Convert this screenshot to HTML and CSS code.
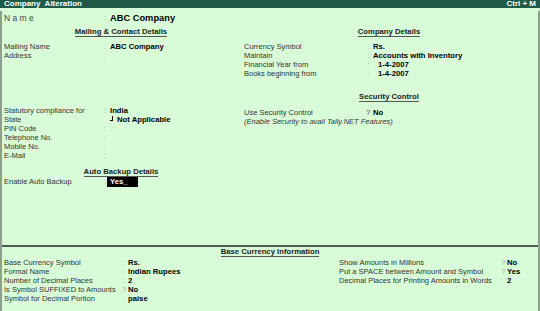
FILE: index.html
```html
<!DOCTYPE html>
<html lang="en">
<head>
    <meta charset="UTF-8">
    <title>Company Alteration</title>
    <link rel="stylesheet" href="styles.css">
</head>
<body>
    <div class="titlebar">
        <span>Company&nbsp; Alteration</span>
        <span>Ctrl + M</span>
    </div>
    <div class="screen">
        <div class="upper">
            <div class="name-row">
                <span class="name-label">N a m e</span>
                <span class="sep">:</span>
                <span class="name-value">ABC Company</span>
            </div>
            <div class="columns">
                <div class="col-left">
                    <div class="heading"><span>Mailing &amp; Contact Details</span></div>
                    <div class="rows first">
                        <div class="row"><span>Mailing Name</span><span class="sep">:</span><b>ABC Company</b></div>
                        <div class="row"><span>Address</span><span class="sep">:</span><b></b></div>
                    </div>
                    <div class="rows statutory">
                        <div class="row"><span>Statutory compliance for</span><span class="sep">:</span><b>India</b></div>
                        <div class="row"><span>State</span><span class="sep"></span><b><i class="corner"></i>Not Applicable</b></div>
                        <div class="row"><span>PIN Code</span><span class="sep">:</span><b></b></div>
                        <div class="row"><span>Telephone No.</span><span class="sep">:</span><b></b></div>
                        <div class="row"><span>Mobile No.</span><span class="sep">:</span><b></b></div>
                        <div class="row"><span>E-Mail</span><span class="sep">:</span><b></b></div>
                    </div>
                    <div class="heading backup"><span>Auto Backup Details</span></div>
                    <div class="rows">
                        <div class="row"><span>Enable Auto Backup</span><span class="sep">:</span><b class="cursor">Yes<u>_</u></b></div>
                    </div>
                </div>
                <div class="col-right">
                    <div class="heading"><span>Company Details</span></div>
                    <div class="rows first">
                        <div class="row"><span>Currency Symbol</span><span class="sep">:</span><b>Rs.</b></div>
                        <div class="row"><span>Maintain</span><span class="sep">:</span><b>Accounts with Inventory</b></div>
                        <div class="row"><span>Financial Year from</span><span class="sep">:</span><b class="date">1-4-2007</b></div>
                        <div class="row"><span>Books beginning from</span><span class="sep">:</span><b class="date">1-4-2007</b></div>
                    </div>
                    <div class="heading security"><span>Security Control</span></div>
                    <div class="rows security-rows">
                        <div class="row"><span>Use Security Control</span><span class="sep">?</span><b>No</b></div>
                        <div class="note">(Enable Security to avail Tally.NET Features)</div>
                    </div>
                </div>
            </div>
        </div>
        <div class="lower">
            <div class="heading"><span>Base Currency Information</span></div>
            <div class="base">
                <div class="rows base-left">
                    <div class="row"><span>Base Currency Symbol</span><span class="sep">:</span><b>Rs.</b></div>
                    <div class="row"><span>Formal Name</span><span class="sep">:</span><b>Indian Rupees</b></div>
                    <div class="row"><span>Number of Decimal Places</span><span class="sep">:</span><b>2</b></div>
                    <div class="row"><span>Is Symbol SUFFIXED to Amounts</span><span class="sep">?</span><b>No</b></div>
                    <div class="row"><span>Symbol for Decimal Portion</span><span class="sep">:</span><b>paise</b></div>
                </div>
                <div class="rows base-right">
                    <div class="row"><span>Show Amounts in Millions</span><span class="sep">?</span><b>No</b></div>
                    <div class="row"><span>Put a SPACE between Amount and Symbol</span><span class="sep">?</span><b>Yes</b></div>
                    <div class="row"><span>Decimal Places for Printing Amounts in Words</span><span class="sep">:</span><b>2</b></div>
                </div>
            </div>
        </div>
    </div>
</body>
</html>
```

FILE: styles.css
```css
/* Tally style green form */
body {
    margin: 0;
    width: 540px;
    height: 311px;
    overflow: hidden;
    font-family: "Liberation Sans", Arial, sans-serif;
    font-size: 7.5px;
    color: #333;
    background: #d9fcd8;
}
.titlebar {
    height: 8px;
    line-height: 8px;
    background: #1f5a46;
    color: #fff;
    font-weight: bold;
    font-size: 8px;
    display: flex;
    justify-content: space-between;
    padding: 0 4px;
    overflow: hidden;
}
.screen {
    height: 303px;
    box-sizing: border-box;
    border-left: 2px solid #8f9f8f;
    border-right: 2px solid #8f9f8f;
    border-bottom: 2px solid #8f9f8f;
}
.upper {
    height: 234px;
}
.name-row {
    display: grid;
    grid-template-columns: 100px 6px auto;
    height: 14px;
    line-height: 14px;
    margin-top: 3px;
    padding-left: 2px;
}
.name-label {
    font-size: 8.5px;
    color: #444;
}
.name-value {
    font-weight: bold;
    font-size: 9.3px;
    color: #000;
}
.sep {
    color: #9aa89a;
}
.columns {
    display: flex;
}
.col-left {
    width: 238px;
}
.col-right {
    flex: 1;
}
.heading {
    margin-top: 2px;
    height: 10px;
    line-height: 10px;
    text-align: center;
    font-weight: bold;
    font-size: 7.7px;
    color: #222;
}
.heading span {
    border-bottom: 1px solid #555;
    padding-bottom: 0;
}
.rows .row {
    display: grid;
    grid-template-columns: 100px 6px auto;
    height: 9px;
    line-height: 9px;
    white-space: nowrap;
}
.col-left .rows {
    padding-left: 2px;
}
.col-right .rows {
    padding-left: 4px;
}
.col-right .rows .row {
    grid-template-columns: 124px 5px auto;
}
.row b {
    font-size: 7.7px;
    color: #000;
}
.first {
    margin-top: 5px;
}
.statutory {
    margin-top: 46px;
}
.heading.backup {
    margin-top: 7px;
}
.heading.security {
    margin-top: 14px;
}
.security-rows {
    margin-top: 6px;
}
.col-right .security-rows .row {
    grid-template-columns: 122px 7px auto;
}
.security-rows .sep {
    color: #444;
}
.note {
    font-style: italic;
    height: 9px;
    line-height: 9px;
}
.date {
    padding-left: 5px;
}
.corner {
    display: inline-block;
    width: 2px;
    height: 4px;
    border-right: 1px solid #000;
    border-bottom: 1px solid #000;
    margin-right: 4px;
    vertical-align: 1px;
}
.cursor {
    background: #000;
    color: #fff !important;
    width: 28px;
    margin-left: -3px;
    padding-left: 3px;
    height: 10px;
}
.cursor u {
    text-decoration: none;
}
.lower {
    border-top: 2px solid #4f5f4f;
}
.lower .heading {
    margin-top: 0;
    height: 9px;
    line-height: 9px;
}
.base {
    display: flex;
    margin-top: 2px;
}
.base-left {
    width: 335px;
    padding-left: 2px;
}
.base-left .row {
    grid-template-columns: 118px 6px auto;
}
.base-right .row {
    grid-template-columns: 162px 6px auto;
}
```
